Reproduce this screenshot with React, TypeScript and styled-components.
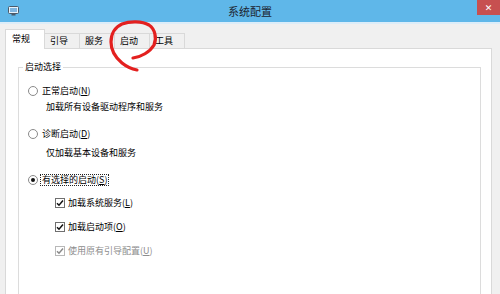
import React from "react";
import styled, { createGlobalStyle } from "styled-components";

const Global = createGlobalStyle`
  html, body { margin: 0; padding: 0; }
  body {
    width: 500px;
    height: 294px;
    overflow: hidden;
    background: #f0f0f0;
    font-family: "Noto Sans CJK SC", "Noto Sans", sans-serif;
  }
`;

const Window = styled.div`
  position: relative;
  width: 500px;
  height: 294px;
  overflow: hidden;
  background: #f0f0f0;
  display: flex;
  flex-direction: column;
`;

const TitleBar = styled.div`
  flex: none;
  height: 22px;
  background: #5fb7e9;
  border-bottom: 2px solid #dcedf9;
  display: grid;
  grid-template-columns: 1fr auto 1fr;
  align-items: center;
`;

const AppIcon = styled.div`
  padding-left: 8px;
  display: flex;
  align-items: center;
`;

const Title = styled.div`
  font-size: 11px;
  line-height: 14px;
  color: #1c2430;
`;

const CloseButton = styled.div`
  justify-self: end;
  align-self: start;
  width: 23px;
  height: 15px;
  background: #c75050;
  color: #fff;
  font-family: "DejaVu Sans", sans-serif;
  font-size: 9px;
  font-weight: bold;
  display: flex;
  align-items: center;
  justify-content: center;
`;

const Body = styled.div`
  flex: 1;
  display: flex;
  flex-direction: column;
  padding: 5px 8px 0 5px;
`;

const TabStrip = styled.div`
  height: 20px;
  display: flex;
  align-items: flex-end;
`;

const Tab = styled.div<{ $active?: boolean }>`
  box-sizing: border-box;
  width: ${(p) => (p.$active ? 40 : 36)}px;
  height: ${(p) => (p.$active ? 20 : 16)}px;
  margin-left: ${(p) => (p.$active ? 0 : -1)}px;
  padding-left: ${(p) => (p.$active ? 6 : 5)}px;
  border: 1px solid #d9d9d9;
  border-bottom: none;
  background: ${(p) => (p.$active ? "#ffffff" : "#f0f0f0")};
  font-size: 9px;
  line-height: ${(p) => (p.$active ? 17 : 14)}px;
  color: #000;
  ${(p) => (p.$active ? "position: relative; z-index: 1;" : "")}
`;

const Panel = styled.div`
  flex: 1;
  margin-top: -1px;
  background: #fff;
  border: 1px solid #d9d9d9;
  padding: 12px 10px 0 12px;
`;

const Group = styled.fieldset`
  margin: 0;
  padding: 0 0 0 0;
  height: 260px;
  border: 1px solid #dcdcdc;
`;

const Legend = styled.legend`
  margin-left: 4px;
  padding: 0 2px;
  font-size: 9px;
  line-height: 12px;
  color: #000;
`;

const OptionList = styled.div`
  display: flex;
  flex-direction: column;
  padding-left: 9px;
`;

const Row = styled.div<{ $mt: number; $indent?: number }>`
  height: 14px;
  margin-top: ${(p) => p.$mt}px;
  padding-left: ${(p) => p.$indent ?? 0}px;
  display: flex;
  align-items: center;
  font-size: 9px;
  line-height: 10px;
  color: #000;
`;

const Radio = styled.span<{ $checked?: boolean }>`
  box-sizing: border-box;
  flex: none;
  width: 10px;
  height: 10px;
  border-radius: 50%;
  border: 1px solid #8a8a8a;
  background: #fff;
  display: flex;
  align-items: center;
  justify-content: center;
  &::after {
    content: "";
    display: ${(p) => (p.$checked ? "block" : "none")};
    width: 4px;
    height: 4px;
    border-radius: 50%;
    background: #111;
  }
`;

const Check = styled.span<{ $disabled?: boolean }>`
  box-sizing: border-box;
  flex: none;
  width: 10px;
  height: 10px;
  border: 1px solid ${(p) => (p.$disabled ? "#b8b8b8" : "#6f6f6f")};
  background: #fff;
  display: flex;
  align-items: center;
  justify-content: center;
`;

const Label = styled.span<{ $focus?: boolean; $disabled?: boolean; $gap: number }>`
  margin-left: ${(p) => p.$gap}px;
  padding: 0 1px;
  border: 1px ${(p) => (p.$focus ? "dotted #222" : "solid transparent")};
  color: ${(p) => (p.$disabled ? "#8d8d8d" : "#000")};
  white-space: nowrap;
`;

const Desc = styled.span`
  white-space: nowrap;
`;

const Annotation = styled.svg`
  position: absolute;
  left: 0;
  top: 0;
  pointer-events: none;
`;

const CheckMark = ({ color }: { color: string }) => (
  <svg width="8" height="8" viewBox="0 0 8 8">
    <path d="M1 4.2 L3 6.2 L7 1.6" fill="none" stroke={color} strokeWidth="1.5" />
  </svg>
);

export default function App() {
  return (
    <>
      <Global />
      <Window>
        <TitleBar>
          <AppIcon>
            <svg width="11" height="10" viewBox="0 0 11 10">
              <rect x="0.5" y="0.5" width="10" height="7" rx="1" fill="#e8f3fb" stroke="#4a5a6a" />
              <rect x="2" y="2" width="7" height="4" fill="#7fb6e0" />
              <rect x="3.5" y="8" width="4" height="1.5" fill="#4a5a6a" />
            </svg>
          </AppIcon>
          <Title>系统配置</Title>
          <CloseButton>✕</CloseButton>
        </TitleBar>
        <Body>
          <TabStrip>
            <Tab $active>常规</Tab>
            <Tab>引导</Tab>
            <Tab>服务</Tab>
            <Tab>启动</Tab>
            <Tab>工具</Tab>
          </TabStrip>
          <Panel>
            <Group>
              <Legend>启动选择</Legend>
              <OptionList>
                <Row $mt={11}>
                  <Radio />
                  <Label $gap={2}>正常启动(<u>N</u>)</Label>
                </Row>
                <Row $mt={2} $indent={18}>
                  <Desc>加载所有设备驱动程序和服务</Desc>
                </Row>
                <Row $mt={13}>
                  <Radio />
                  <Label $gap={2}>诊断启动(<u>D</u>)</Label>
                </Row>
                <Row $mt={5} $indent={18}>
                  <Desc>仅加载基本设备和服务</Desc>
                </Row>
                <Row $mt={13}>
                  <Radio $checked />
                  <Label $gap={2} $focus>有选择的启动(<u>S</u>)</Label>
                </Row>
                <Row $mt={9} $indent={27}>
                  <Check><CheckMark color="#111" /></Check>
                  <Label $gap={1}>加载系统服务(<u>L</u>)</Label>
                </Row>
                <Row $mt={10} $indent={27}>
                  <Check><CheckMark color="#111" /></Check>
                  <Label $gap={1}>加载启动项(<u>O</u>)</Label>
                </Row>
                <Row $mt={10} $indent={27}>
                  <Check $disabled><CheckMark color="#8a8a8a" /></Check>
                  <Label $gap={1} $disabled>使用原有引导配置(<u>U</u>)</Label>
                </Row>
              </OptionList>
            </Group>
          </Panel>
        </Body>
        <Annotation width="500" height="294" viewBox="0 0 500 294">
          <path
            d="M133 58 C141 57 150 52 154 45 C157 38 155 29 149 25 C142 21 130 21 122 24 C115 27 111 34 111 42 C111 51 116 58 122 63 C127 67 132 69 137 70"
            fill="none"
            stroke="#e3201f"
            strokeWidth="3.2"
            strokeLinecap="round"
            strokeLinejoin="round"
          />
        </Annotation>
      </Window>
    </>
  );
}
